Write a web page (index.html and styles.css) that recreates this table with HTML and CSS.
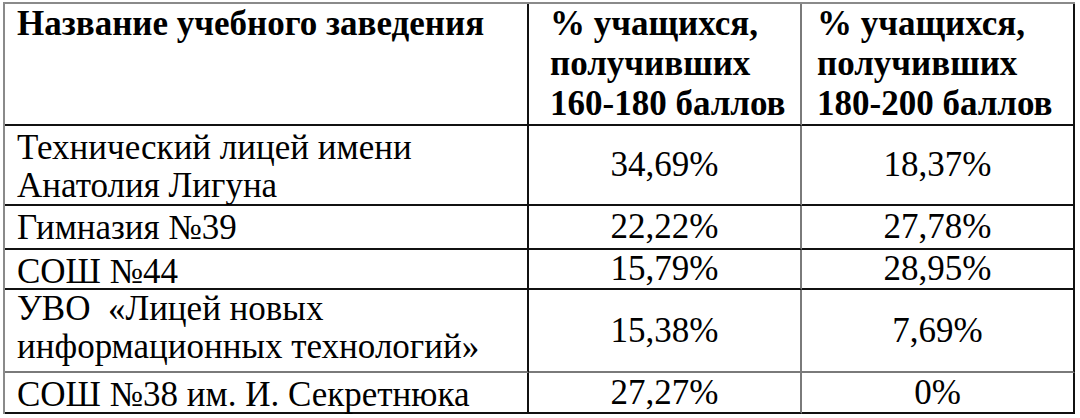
FILE: index.html
```html
<!DOCTYPE html>
<html lang="ru">
<head>
<meta charset="utf-8">
<link rel="stylesheet" href="styles.css">
</head>
<body>
<div class="grid" role="table">
  <div class="cell head c-name" role="columnheader">Название учебного заведения</div>
  <div class="cell head c-a" role="columnheader">% учащихся,<br>получивших<br>160-180 баллов</div>
  <div class="cell head c-b" role="columnheader">% учащихся,<br>получивших<br>180-200 баллов</div>

  <div class="cell name" role="cell">Технический лицей имени<br>Анатолия Лигуна</div>
  <div class="cell num c-a" role="cell">34,69%</div>
  <div class="cell num c-b" role="cell">18,37%</div>

  <div class="cell name" role="cell">Гимназия №39</div>
  <div class="cell num c-a" role="cell">22,22%</div>
  <div class="cell num c-b" role="cell">27,78%</div>

  <div class="cell name" role="cell">СОШ №44</div>
  <div class="cell num c-a" role="cell">15,79%</div>
  <div class="cell num c-b" role="cell">28,95%</div>

  <div class="cell name tight gray" role="cell">УВО &nbsp;«Лицей новых<br>информационных технологий»</div>
  <div class="cell num c-a gray" role="cell">15,38%</div>
  <div class="cell num c-b gray" role="cell">7,69%</div>

  <div class="cell name" role="cell">СОШ №38 им. И. Секретнюка</div>
  <div class="cell num c-a" role="cell">27,27%</div>
  <div class="cell num c-b" role="cell">0%</div>
</div>
</body>
</html>
```
FILE: styles.css
```css
body {
  margin: 0;
  padding: 0;
  background: #ffffff;
}
.grid {
  box-sizing: border-box;
  margin: 2px 0 0 3px;
  width: 1072px;
  display: grid;
  grid-template-columns: 524px 273px 273px;
  grid-template-rows: 122px 80px 44px 40px 83px 41px;
  border-top: 2px solid #8a8a8a;
  border-left: 2px solid #8a8a8a;
}
.cell {
  box-sizing: border-box;
  border-right: 2px solid #111;
  border-bottom: 2px solid #111;
  font-family: "Liberation Serif", "Times New Roman", Tinos, serif;
  font-size: 35px;
  line-height: 38px;
  color: #000;
  white-space: nowrap;
}
.c-a { border-right-color: #7a7a7a; }
.gray { border-bottom-color: #7a7a7a; }
.head {
  font-weight: bold;
  font-size: 35px;
  line-height: 40px;
  padding-top: 0;
}
.head.c-name { padding-left: 12px; }
.head.c-a { padding-left: 21px; }
.head.c-b { padding-left: 15px; }
.name {
  padding: 3px 0 0 12px;
}
.name.tight {
  padding-top: 0;
}
.num {
  display: flex;
  align-items: center;
  justify-content: center;
}
```
